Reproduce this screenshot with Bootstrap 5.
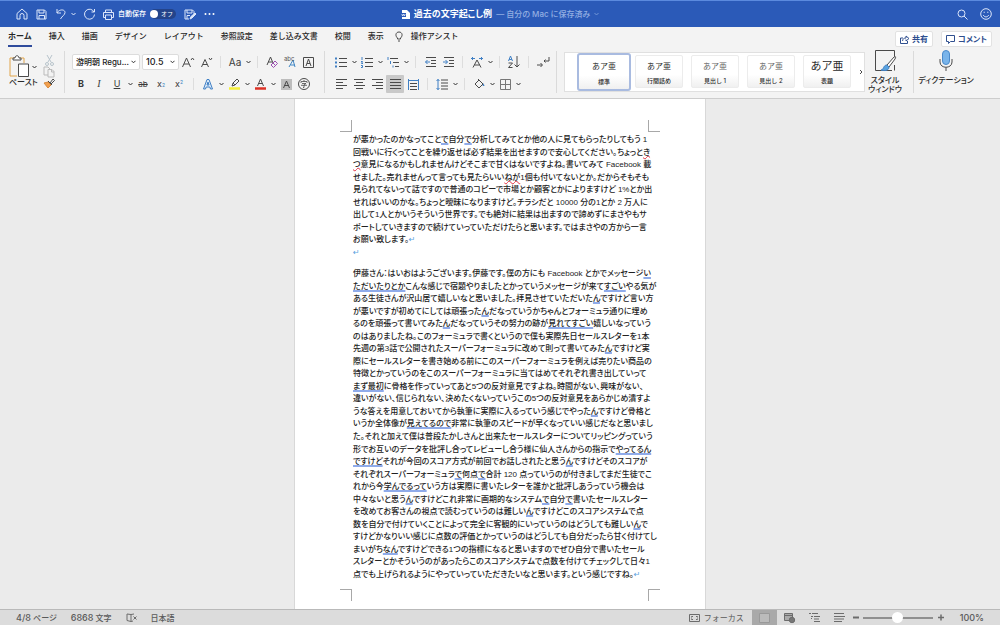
<!DOCTYPE html>
<html lang="ja">
<head>
<meta charset="utf-8">
<meta name="viewport" content="width=device-width, initial-scale=1">
<title>過去の文字起こし例</title>
<link rel="stylesheet" href="https://cdn.jsdelivr.net/npm/bootstrap@5.3.0/dist/css/bootstrap.min.css">
<style>
body{font-family:Inter,"Noto Sans CJK JP",sans-serif;font-size:8px;line-height:12px;color:#2b2b2b;background:#e9e9e9}
svg{display:block;fill:none;stroke:#4a4a4a;stroke-width:1;overflow:visible}
button{padding:0;border:0;background:none;color:inherit;font-size:inherit;line-height:inherit}
.titlebar{height:27px;background:#2b5ab8;border-top:1px solid #5b8ade;color:#fff}
.titlebar svg{stroke:#dce6fa}
.titlebar label{font-size:7px}
.doc-title{font-size:9px;font-feature-settings:"palt"}
.doc-title .saved{color:#93afe2;font-weight:500;font-size:8px}
.side{flex:1 1 40%}
.quick{gap:8px}
.autosave{width:26px;height:10px;border-radius:5px;background:#24448a;font-size:6px;line-height:10px;padding-left:11px;position:relative}
.autosave::before{content:"";position:absolute;left:0;top:1px;width:8px;height:8px;border-radius:50%;background:#fff}
.autosave input{position:absolute;inset:0;opacity:0;margin:0}
.ribbon{background:#f3f3f3;border-bottom:1px solid #cdcdcd}
.tabs{height:22px;padding:0 8px;gap:17px;font-weight:500}
.tabs a{color:#262626;text-decoration:none;line-height:18px;white-space:nowrap}
.tabs a.active{font-weight:700;border-bottom:2px solid #2f4b9c}
.tab-end{gap:11px}
.act{height:16px;padding:0 4px;background:#fff;border:1px solid #e2e2e2;border-radius:2px;color:#2f4f8f;font-weight:700;font-feature-settings:"palt";display:flex;align-items:center;gap:3px}
.act svg{stroke:#2f4f8f}
.tools{height:49px;padding:0 8px 4px}
.tools>*{flex-shrink:0}
.rule{width:1px;height:42px;background:#dadada}
.tool{width:18px;height:18px;display:flex;align-items:center;justify-content:center;font-size:10px;color:#3a3a3a}
.chev{width:8px;height:18px;display:flex;align-items:center;justify-content:center}
.chev svg{stroke:#333}
.gap-rule{width:11px;height:12px;background:linear-gradient(#ddd,#ddd) center/1px 100% no-repeat}
.toolrow{height:22px;display:flex;align-items:center}
.fld{height:16px;border:1px solid #dcdcdc;border-radius:2px;font-size:9px;line-height:12px;padding:0 10px 0 3px;color:#222;font-weight:500;appearance:none;background:#fff url("data:image/svg+xml,%3Csvg xmlns='http://www.w3.org/2000/svg' width='5' height='4'%3E%3Cpath d='M.5 .8l2 2 2-2' fill='none' stroke='%23333'/%3E%3C/svg%3E") right 3px center no-repeat}
.fld-font{width:68px;font-size:8px}.fld-size{width:37px;margin-left:2px}
.on{background:#c9c9c9;border-radius:1px}
.g-paste{width:56px}.g-font{width:252px;margin-left:7px;padding-top:3px}.g-para{width:224px;margin-left:7px;padding-top:3px}
.tools .gallery{flex:1 1 0;min-width:0;height:40px;background:#fff;border:1px solid #e0e0e0;margin-left:7px;padding-left:12px;gap:8px}
.style-card{flex-shrink:0;width:48px;height:33px;border:1px solid #ececec;border-radius:2px;display:flex;flex-direction:column;justify-content:flex-start;font-size:6px;font-weight:500;line-height:9px;background:linear-gradient(#fff 60%,#f0f0f0)}
.style-card span{font-size:8px;line-height:20px;font-weight:400}
.style-card.picked{width:54px;height:38px;border:2px solid #a9bbe0;border-radius:3px;margin-right:-4px}
.style-card.picked span{line-height:22px}
.style-card .pale{color:#666}
.style-card .big{font-size:11px}
.lbl{font-weight:500;line-height:9px;font-feature-settings:"palt"}
.g-pane{width:40px}.g-dict{width:64px;margin-right:14px}
.work{background:#ebebeb}
.sheet{width:412px;background:#fff;border:solid #d8d8d8;border-width:0 1px;padding-top:21px}
.marks{height:12px;padding:0 45px}
.marks i{width:12px;border:0 solid #a8a8a8}
.marks .r{border-right-width:1px}.marks .l{border-left-width:1px}.marks .b{border-bottom-width:1px}.marks .t{border-top-width:1px}
.para{margin:0 56px 0 58px;display:grid;grid-auto-rows:1fr;align-items:center;white-space:nowrap;font-family:"Liberation Sans","Noto Sans CJK JP",sans-serif;font-size:8px;font-weight:500;color:#222;font-feature-settings:"palt"}
.para-a{height:125px;margin-top:2px}.para-b{height:313px;margin-top:9px;margin-bottom:8px}
.para u{text-decoration:underline 2px #8fabea;text-underline-offset:1px;text-decoration-skip-ink:none}
.para s{text-decoration:underline wavy 1px #e03040;text-underline-offset:0;text-decoration-skip-ink:none}
.para em{font-style:normal;color:#5a9fe0;font-family:"DejaVu Sans";font-size:8px;line-height:8px}
.status{height:16px;background:#dcdcdc;border-top:1px solid #b9b9b9;color:#5a5a5a;font-weight:500}
.status .num{font-size:9px}
.status .kana{font-feature-settings:"palt"}
.status-left{gap:14px}
.status svg{stroke:#6c6c6c}
.view{width:25px;height:15px;display:flex;align-items:center;justify-content:center}
.view.picked{background:#a9a9a9}
.zoomer{width:70px;height:12px;appearance:none;background:linear-gradient(#8f8f8f,#8f8f8f) center/100% 2px no-repeat}
.zoomer::-webkit-slider-thumb{appearance:none;width:11px;height:11px;border-radius:50%;background:#fff}
</style>
</head>
<body class="vh-100 d-flex flex-column overflow-hidden">
<svg width="0" height="0" class="position-absolute"><defs>
<symbol id="cv" viewBox="0 0 5 4"><path d="M.5 1l2 2 2-2"/></symbol>
</defs></svg>

<header class="titlebar d-flex align-items-center flex-shrink-0">
  <div class="side d-flex align-items-center ps-3">
    <div class="quick d-flex align-items-center">
      <button aria-label="ホーム"><svg width="12" height="12"><path d="M1 5.5L6 1l5 4.500V11H8V7.500a2 2 0 0 0-4 0V11H1z"/></svg></button>
      <button aria-label="保存"><svg width="11" height="11"><path d="M1 1h7.500L10 2.500V10H1zM3 1v3h5V1M3 10V6.500h5.500V10"/></svg></button>
      <div class="d-flex align-items-center gap-1"><button aria-label="元に戻す"><svg width="12" height="12"><path d="M2 1v4h4M2 5c2-4 8-4 8-.5C10 7 7 8 5.500 11"/></svg></button>
      <svg width="5" height="4"><use href="#cv"/></svg></div>
      <button aria-label="やり直し"><svg width="11" height="12"><path d="M10 4A5 5 0 1 0 10.500 6.500M10.500 1v3h-3"/></svg></button>
      <button aria-label="印刷"><svg width="11" height="11"><path d="M2.500 3.500V1h6v2.500M2.500 8.500h-2v-5h10v5h-2M2.500 6h6v4.500h-6z"/></svg></button>
    </div>
    <label for="auto" class="ms-1 fw-medium text-nowrap">自動保存</label>
    <span class="autosave ms-1">オフ<input id="auto" type="checkbox"></span>
    <button class="ms-2" aria-label="名前を付けて保存"><svg width="12" height="11"><path d="M10 5V2.500L8.500 1H1v9h4M3 1v3h5V1M3 10V6.500h3"/><path fill="#dce6fa" d="M6 10l1-2.500L11 4l1 1-4 4z"/></svg></button>
    <button class="ms-2" aria-label="その他"><svg width="11" height="4" style="fill:#fff;stroke:none"><circle cx="1.500" cy="2" r="1"/><circle cx="5.500" cy="2" r="1"/><circle cx="9.500" cy="2" r="1"/></svg></button>
  </div>
  <div class="doc-title d-flex align-items-center gap-1 text-nowrap">
    <svg width="9" height="11" style="stroke:none"><path fill="#fff" d="M1 1h5l3 3v6H1z"/><path fill="#2b5ab8" d="M0 4h5v4H0z"/><path d="M.8 5l.8 2 .9-2 .9 2L4.200 5" stroke="#fff" stroke-width=".7"/></svg>
    <strong>過去の文字起こし例</strong><span class="saved">— 自分の Mac に保存済み</span>
    <svg width="5" height="4" style="stroke:#7396d6"><use href="#cv"/></svg>
  </div>
  <div class="side d-flex justify-content-end align-items-center pe-2" style="gap:12px">
    <button aria-label="検索"><svg width="11" height="11"><circle cx="4.500" cy="4.500" r="3.500"/><path d="M7 7l3.500 3.500"/></svg></button>
    <button aria-label="フィードバック"><svg width="12" height="12"><circle cx="6" cy="6" r="5.300"/><path d="M3.300 7c1 2.500 4.400 2.500 5.400 0M4.200 3.700v1.200M7.800 3.700v1.200"/></svg></button>
  </div>
</header>

<section class="ribbon flex-shrink-0">
  <nav class="tabs d-flex align-items-start">
    <a href="#" class="active">ホーム</a><a href="#">挿入</a><a href="#">描画</a><a href="#">デザイン</a><a href="#">レイアウト</a><a href="#">参照設定</a><a href="#">差し込み文書</a><a href="#">校閲</a>
    <div class="tab-end d-flex"><a href="#">表示</a>
    <a href="#" class="d-flex align-items-center gap-2"><svg width="8" height="11"><path d="M2.500 8V7C0 5 .5 1 4 1s4 4 1.500 6v1zM3 10h2"/></svg>操作アシスト</a></div>
    <div class="ms-auto d-flex gap-2 pt-1">
      <button class="act"><svg width="9" height="9"><path d="M3 3H.5v5.500h7V6M2.500 6C3 3.500 4 3 6 3V1l3 2.500L6 6V4.500"/></svg>共有</button>
      <button class="act"><svg width="9" height="9"><path d="M.5.500h8v6h-4l-2 2v-2h-2z"/></svg>コメント</button>
    </div>
  </nav>
  <div class="tools d-flex align-items-center">
    <div class="g-paste d-flex">
      <div class="d-flex flex-column align-items-center" style="width:31px">
        <div class="d-flex align-items-center"><button aria-label="ペースト"><svg width="21" height="23"><path stroke="#e0a44a" d="M6 3H1v18h7M11 3h4v5"/><path fill="#fff" d="M4 5V3h2c0-3 4-3 4 0h2v2zM9.500 9h10v12.500h-10z"/></svg></button><span class="chev"><svg width="5" height="4"><use href="#cv"/></svg></span></div>
        <span class="lbl text-nowrap">ペースト</span>
      </div>
      <div class="d-flex flex-column align-items-center justify-content-between ms-1">
        <button aria-label="切り取り"><svg width="9" height="11" style="stroke:#b8c4cc"><path d="M2 0l4 7M7 0L3 7"/><circle cx="2" cy="9" r="1.500"/><circle cx="7" cy="9" r="1.500"/></svg></button>
        <button aria-label="コピー"><svg width="12" height="12" style="stroke:#bbb"><path d="M5 9H1V1h4l2 2M5 3.500h4l2 2V11H5zM8.500 3.500V6H11"/></svg></button>
        <button aria-label="書式"><svg width="12" height="10"><path fill="#f2a04e" stroke="#d98a3c" d="M1 5l4-1 3 3-3 3z"/><path d="M5 3l4 4M7 5l3-4 1.500 1.500L8 6"/></svg></button>
      </div>
    </div>
    <div class="rule"></div>
    <div class="g-font">
      <div class="toolrow">
        <select class="fld fld-font" aria-label="フォント"><option>游明朝 Regu...</option></select>
        <select class="fld fld-size" aria-label="サイズ"><option>10.5</option></select>
        <button class="tool" aria-label="拡大"><svg width="12" height="11"><path d="M.5 10L4.500 1l4 9M2 7h5M9 3l1.500-2L12 3"/></svg></button>
        <button class="tool" aria-label="縮小"><svg width="12" height="11"><path d="M1.500 10L5 2.500 8.500 10M3 7.500h4M9 1l1.500 2L12 1"/></svg></button>
        <span class="gap-rule"></span>
        <button class="tool">Aa</button><span class="chev"><svg width="5" height="4"><use href="#cv"/></svg></span>
        <span class="gap-rule"></span>
        <button class="tool" aria-label="書式のクリア"><svg width="12" height="12"><path d="M1 9L4.500 1l2.500 6M2 6h4"/><path stroke="#9b4fb0" d="M5 9l4-4 2.500 2.500-4 4zM7 7l2.500 2.500"/></svg></button>
        <button class="tool" aria-label="ルビ"><svg width="13" height="12"><path stroke="#3f86c4" d="M5 11L9 4l2 7M6.500 9H11"/><text x="0" y="5" font-size="6" fill="#555" stroke="none">abc</text></svg></button>
        <button class="tool" aria-label="囲み線"><svg width="11" height="11"><path d="M.5.500h10v10H.500zM3 9l2.500-7L8 9M4 6.500h3"/></svg></button>
      </div>
      <div class="toolrow">
        <button class="tool fw-bold" style="font-size:9px">B</button><button class="tool fst-italic" style="font-family:'Liberation Serif'">I</button><button class="tool text-decoration-underline" style="font-size:9px">U</button><span class="chev"><svg width="5" height="4"><use href="#cv"/></svg></span>
        <button class="tool text-decoration-line-through" style="font-size:8px">ab</button><button class="tool" aria-label="下付き" style="font-size:9px">x<sub style="font-size:5px;color:#3f86c4">2</sub></button><button class="tool" aria-label="上付き" style="font-size:9px">x<sup style="font-size:5px;color:#3f86c4">2</sup></button>
        <span class="gap-rule"></span>
        <button class="tool" aria-label="文字の効果"><svg width="10" height="11" style="stroke:#3f7fc4"><path fill="#dcebfa" d="M.5 10L4 .5h2L9.500 10h-2L6.800 8H3.200L2.500 10zM4 6h2L5 3z"/></svg></button><span class="chev"><svg width="5" height="4"><use href="#cv"/></svg></span>
        <button class="tool" aria-label="蛍光ペン"><svg width="11" height="12"><path d="M3 8l1-3 4-4 2 2-4 4zM4 5l2 2"/><path stroke="#f4ef3a" stroke-width="2.500" d="M0 10.500h11"/></svg></button><span class="chev"><svg width="5" height="4"><use href="#cv"/></svg></span>
        <button class="tool" aria-label="文字の色"><svg width="11" height="12"><path d="M2.500 8l3-7 3 7M3.500 5.500h4"/><path stroke="#dc3226" stroke-width="2.500" d="M0 10.500h11"/></svg></button><span class="chev"><svg width="5" height="4"><use href="#cv"/></svg></span>
        <button class="tool" aria-label="網かけ"><svg width="11" height="11"><path fill="#bdbdbd" stroke="none" d="M0 0h11v11H0z"/><path d="M2.500 9l3-7 3 7M3.500 6.500h4"/></svg></button>
        <button class="tool" aria-label="囲い文字"><svg width="12" height="12"><circle cx="6" cy="6" r="5.500"/><path d="M6 2v1.500M3 5V3.500h6V5M4 5.500h4L6 7v2.500H5M3 7.300h6" stroke-width=".8"/></svg></button>
      </div>
    </div>
    <div class="rule"></div>
    <div class="g-para">
      <div class="toolrow">
        <button class="tool" aria-label="箇条書き"><svg width="12" height="11"><path d="M4 1.500h8M4 5.500h8M4 9.500h8"/><path stroke="#3f7fc4" stroke-width="2" d="M0 1.500h2M0 5.500h2M0 9.500h2"/></svg></button><span class="chev"><svg width="5" height="4"><use href="#cv"/></svg></span>
        <button class="tool" aria-label="段落番号"><svg width="12" height="11"><path d="M4 1.500h8M4 5.500h8M4 9.500h8"/><path stroke="#3f7fc4" d="M1 0v3M0 4.500h1.500L.5 6.500H2M0 8.500h1.500v2H0"/></svg></button><span class="chev"><svg width="5" height="4"><use href="#cv"/></svg></span>
        <button class="tool" aria-label="アウトライン"><svg width="12" height="11"><path d="M3 1.500h8M6 5.500h6M8 9.500h4"/><path stroke="#3f7fc4" d="M1 0v3M3.500 4v3M6 8.500v2"/></svg></button><span class="chev"><svg width="5" height="4"><use href="#cv"/></svg></span>
        <span class="gap-rule"></span>
        <button class="tool" aria-label="インデント解除"><svg width="11" height="10"><path d="M1 .5h10M6 3.500h5M6 6.500h5M1 9.500h10"/><path stroke="#3f7fc4" d="M5 5H.5M2.500 3l-2 2 2 2"/></svg></button>
        <button class="tool" aria-label="インデント"><svg width="11" height="10"><path d="M1 .5h10M6 3.500h5M6 6.500h5M1 9.500h10"/><path stroke="#3f7fc4" d="M0 5h4.500M2.500 3l2 2-2 2"/></svg></button>
        <span class="gap-rule"></span>
        <button class="tool" aria-label="拡張書式"><svg width="12" height="11"><path d="M2 10.500L6 3l4 7.500M3.500 8h5"/><path stroke="#3f7fc4" d="M0 1.500h4M2 0L.5 1.500 2 3M8 1.500h4M10 0l1.500 1.500L10 3"/></svg></button><span class="chev"><svg width="5" height="4"><use href="#cv"/></svg></span>
        <span class="gap-rule"></span>
        <button class="tool" aria-label="並べ替え"><svg width="12" height="12"><path stroke="#3f7fc4" d="M.5 5L2.500 0l2 5M1.200 3.500h2.600"/><path d="M.5 7h4l-4 4.500h4M9 0v11M6.500 8.500L9 11l2.500-2.500"/></svg></button>
        <span class="gap-rule"></span>
        <button class="tool" aria-label="編集記号"><svg width="13" height="11"><path d="M12 0v4H7M8.500 2.500L7 4l1.500 1.500M0 8h5M3.500 6L5.500 8l-2 2"/></svg></button>
      </div>
      <div class="toolrow">
        <button class="tool" aria-label="左揃え"><svg width="11" height="11"><path d="M0 .5h11M0 3.500h7M0 6.500h11M0 9.500h7"/></svg></button>
        <button class="tool" aria-label="中央揃え"><svg width="11" height="11"><path d="M0 .5h11M2 3.500h7M0 6.500h11M2 9.500h7"/></svg></button>
        <button class="tool" aria-label="右揃え"><svg width="11" height="11"><path d="M0 .5h11M4 3.500h7M0 6.500h11M4 9.500h7"/></svg></button>
        <button class="tool on" aria-label="両端揃え"><svg width="11" height="11"><path d="M0 .5h11M0 3.500h11M0 6.500h11M0 9.500h11"/></svg></button>
        <button class="tool" aria-label="均等割り付け"><svg width="11" height="11"><path stroke="#3f7fc4" d="M.5 0v11M10.500 0v11M1 1.500h9"/><path d="M2 4.500h7M2 7.500h7M2 10.500h7"/></svg></button>
        <span class="gap-rule"></span>
        <button class="tool" aria-label="行間"><svg width="12" height="11"><path d="M5 1h7M5 4h7M5 7h7M5 10h7"/><path stroke="#3f7fc4" d="M2 0v11M.5 2L2 .5 3.500 2M.5 9L2 10.500 3.500 9"/></svg></button><span class="chev"><svg width="5" height="4"><use href="#cv"/></svg></span>
        <span class="gap-rule"></span>
        <button class="tool" aria-label="塗りつぶし"><svg width="11" height="10"><path d="M1 5l4-4 4 4-4 4zM4 0l2 2"/><path fill="#3f7fc4" stroke="none" d="M9.500 4l1 3h-2z"/></svg></button><span class="chev"><svg width="5" height="4"><use href="#cv"/></svg></span>
        <button class="tool" aria-label="罫線"><svg width="11" height="11" style="stroke:#777"><path d="M.5.500h10v10H.500zM5.500.500v10M.500 5.500h10"/></svg></button><span class="chev"><svg width="5" height="4"><use href="#cv"/></svg></span>
      </div>
    </div>
    <div class="rule"></div>
    <div class="gallery d-flex align-items-center">
      <button class="style-card picked"><span>あア亜</span>標準</button>
      <button class="style-card"><span>あア亜</span>行間詰め</button>
      <button class="style-card"><span class="pale">あア亜</span>見出し 1</button>
      <button class="style-card"><span class="pale">あア亜</span>見出し 2</button>
      <button class="style-card"><span class="big">あア亜</span>表題</button>
      <button aria-label="次へ"><svg width="4" height="6"><path d="M1 1l2 2-2 2"/></svg></button>
    </div>
    <button class="g-pane d-flex flex-column align-items-center"><svg width="21" height="22" class="mb-1"><path d="M17 20.500H.500V.500h19V8M19.500 15v5.500"/><path fill="#fff" d="M12 15l7-8c2-1 2 0 1 2l-6 8z"/><path fill="#5aa2de" stroke="#3f7fc4" d="M6 20c3 0 2-5 6-5l2 2c0 4-5 4-8 3z"/></svg><span class="lbl text-nowrap">スタイル<br>ウィンドウ</span></button>
    <div class="rule ms-2"></div>
    <button class="g-dict d-flex flex-column align-items-center pb-2"><svg width="14" height="22" class="mb-1"><rect x="3.500" y=".5" width="7" height="14" rx="3.500" fill="#79b4ea" stroke="#4a8acb"/><path d="M1 9v3c0 7 12 7 12 0V9M7 17.500V21"/></svg><span class="lbl text-nowrap">ディクテーション</span></button>
  </div>
</section>

<main class="work flex-grow-1 d-flex justify-content-center overflow-hidden">
  <article class="sheet">
    <div class="marks d-flex justify-content-between"><i class="r b"></i><i class="l b"></i></div>
    <div class="para para-a">
<div>が悪かったのかなってこと<u>で</u>自分<u>で</u>分析してみてとか他の人に見てもらったりしてもう 1</div>
<div>回戦いに行くってことを繰り返せば必ず結果を出せますので安心してください。ちょっと<s>き</s></div>
<div><s>つ</s>意見になるかもしれませんけどそこまで甘くはないですよね。書いてみて Facebook 載</div>
<div>せました。売れませんって言っても見たらいい<s>ねが</s>1個も付いてないとか。だからそもそも</div>
<div>見られてないって話ですので普通のコピーで市場とか顧客とかによりますけど 1%とか出</div>
<div>せればいいのかな。ちょっと曖昧になりますけど。チラシだと 10000 分の1とか 2 万人に</div>
<div>出して1人とかいうそういう世界です。でも絶対に結果は出ますので諦めずにまさやもサ</div>
<div>ポートしていきますので続けていっていただけたらと思います。ではまさやの方から一言</div>
<div>お願い致します。<em>↵</em></div>
<div><em>↵</em></div>
    </div>
    <div class="para para-b">
<div>伊藤さん：はいおはようございます。伊藤です。僕の方にも Facebook とかでメッセージ<u>い</u></div>
<div><u>ただいたりとか</u>こんな感じで宿題やりましたとかっていうメッセージが来て<u>すごい</u>やる気が</div>
<div>ある生徒さんが沢山居て嬉しいなと思いました。拝見させていただいた<u>ん</u>ですけど言い方</div>
<div>が悪いですが初めてにしては頑張った<u>ん</u>だなっていうかちゃんとフォーミュラ通りに埋め</div>
<div>るのを頑張って書いてみた<u>ん</u>だなっていうその努力の跡が<u>見れてすごい</u>嬉しいなっていう</div>
<div>のはありましたね。このフォーミュラで書くというので僕も実際先日セールスレターを1本</div>
<div>先週の第3話で公開されたスーパーフォーミュラに改めて則って書いてみた<u>ん</u>ですけど実</div>
<div>際にセールスレターを書き始める前にこのスーパーフォーミュラを例えば売りたい商品の</div>
<div>特徴とかっていうのをこのスーパーフォーミュラに当てはめてそれぞれ書き出していって</div>
<div><u>まず最初</u>に骨格を作っていってあと5つの反対意見ですよね。時間がない、興味がない、</div>
<div>違いがない、信じられない、決めたくないっていうこの5つの反対意見をあらかじめ潰すよ</div>
<div>うな答えを用意しておいてから執筆に実際に入るっていう感じでやった<u>ん</u>ですけど骨格と</div>
<div>いうか全体像が<u>見えてるので</u>非常に執筆のスピードが早くなっていい感じだなと思いまし</div>
<div>た。それと加えて僕は普段たかしさんと出来たセールスレターについてリッピングっていう</div>
<div>形でお互いのデータを批評し合ってレビューし合う様に仙人さんからの指示で<u>やってるん</u></div>
<div><u>ですけど</u>それが今回のスコア方式が前回でお話しされたと思う<u>ん</u>ですけどそのスコアが</div>
<div>それぞれスーパーフォーミュラ<u>で</u>何点<u>で</u>合計 120 点っていうのが付きましてまだ生徒でこ</div>
<div>れから今<u>学んでるって</u>いう方は実際に書いたレターを誰かと批評しあうっていう機会は</div>
<div>中々ないと思う<u>ん</u>ですけどこれ非常に画期的なシステム<u>で</u>自分<u>で</u>書いたセールスレター</div>
<div>を改めてお客さんの視点で読むっていうのは難しい<u>ん</u>ですけどこのスコアシステムで点</div>
<div>数を自分で付けていくことによって完全に客観的にいっていうのはどうしても難しい<u>ん</u>で</div>
<div>すけどかなりいい感じに点数の評価とかっていうのはどうしても自分だったら甘く付けてし</div>
<div>まいがち<u>なん</u>ですけどできる1つの指標になると思いますのでぜひ自分で書いたセール</div>
<div>スレターとかそういうのがあったらこのスコアシステムで点数を付けてチェックして日々1</div>
<div>点でも上げられるようにやっていっていただきたいなと思います。という感じですね。<em>↵</em></div>
    </div>
    <div class="marks d-flex justify-content-between"><i class="r t"></i><i class="l t"></i></div>
  </article>
</main>

<footer class="status d-flex align-items-center flex-shrink-0 px-3 text-nowrap">
  <div class="status-left d-flex align-items-center">
    <span class="kana"><span class="num">4/8</span> ページ</span><span class="kana"><span class="num">6868</span> 文字</span>
    <svg width="11" height="9"><path d="M5 1.500v7M5 1.500L1 1v6.500l4 1 2-.5M5 1.500L8 1M7.500 3.500l3 3M10.500 3.500l-3 3"/></svg>
    <span>日本語</span>
  </div>
  <div class="ms-auto d-flex align-items-center">
    <button class="d-flex align-items-center gap-1 me-2"><svg width="11" height="8"><path d="M.5.500h10v7H.500z" stroke-width="1"/><path d="M2.500 3.500v-1h1.500M7 2.500h1.500v1M8.500 4.500v1H7M4 5.500H2.500v-1"/></svg>フォーカス</button>
    <button class="view picked" aria-label="印刷レイアウト"><svg width="11" height="10" style="stroke:#999"><path fill="#bbb" d="M.5.500h10v9H.500z"/></svg></button>
    <button class="view" aria-label="Web"><svg width="11" height="10"><path fill="#aaa" d="M.5.500h8v7h-8zM.500 2.500h8"/><circle cx="8" cy="7" r="2.700" fill="#777"/></svg></button>
    <button class="view" aria-label="アウトライン表示"><svg width="11" height="9"><path d="M0 .5h2M3 .5h6M2 3.500h2M5 3.500h6M2 5.500h1M5 6h5M5 8.500h6"/></svg></button>
    <button class="view" aria-label="下書き"><svg width="11" height="9"><path d="M0 .5h10M0 3.500h11M0 6h10M0 8.500h8"/></svg></button>
    <div class="d-flex align-items-center gap-1 me-3"><button aria-label="縮小"><svg width="7" height="7" style="stroke-width:2"><path d="M1 3.500h6"/></svg></button>
    <input class="zoomer" type="range" aria-label="ズーム" value="50">
    <button aria-label="拡大"><svg width="7" height="7" style="stroke-width:1.500"><path d="M1 3.500h6M4 .5v6"/></svg></button></div>
    <span class="num">100%</span>
  </div>
</footer>
<script src="https://cdn.jsdelivr.net/npm/bootstrap@5.3.0/dist/js/bootstrap.bundle.min.js"></script>
</body>
</html>
